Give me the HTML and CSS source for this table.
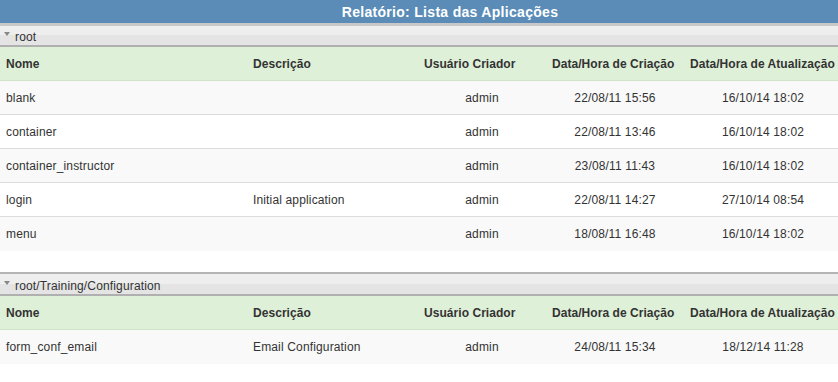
FILE: index.html
```html
<!DOCTYPE html>
<html lang="pt">
<head>
<meta charset="utf-8">
<link rel="stylesheet" href="styles.css">
</head>
<body>
<div class="report">
  <div class="title">Relatório: Lista das Aplicações</div>

  <section class="group">
    <div class="group-head"><span class="caret"></span>root</div>
    <div class="row head">
      <div class="c name">Nome</div><div class="c desc">Descrição</div><div class="c user">Usuário Criador</div><div class="c dt">Data/Hora de Criação</div><div class="c dt2">Data/Hora de Atualização</div><div class="c fill"></div>
    </div>
    <div class="row odd"><div class="c name">blank</div><div class="c desc"></div><div class="c user ctr">admin</div><div class="c dt ctr">22/08/11 15:56</div><div class="c dt2 ctr">16/10/14 18:02</div><div class="c fill"></div></div>
    <div class="row even"><div class="c name">container</div><div class="c desc"></div><div class="c user ctr">admin</div><div class="c dt ctr">22/08/11 13:46</div><div class="c dt2 ctr">16/10/14 18:02</div><div class="c fill"></div></div>
    <div class="row odd"><div class="c name">container_instructor</div><div class="c desc"></div><div class="c user ctr">admin</div><div class="c dt ctr">23/08/11 11:43</div><div class="c dt2 ctr">16/10/14 18:02</div><div class="c fill"></div></div>
    <div class="row even"><div class="c name">login</div><div class="c desc">Initial application</div><div class="c user ctr">admin</div><div class="c dt ctr">22/08/11 14:27</div><div class="c dt2 ctr">27/10/14 08:54</div><div class="c fill"></div></div>
    <div class="row odd last"><div class="c name">menu</div><div class="c desc"></div><div class="c user ctr">admin</div><div class="c dt ctr">18/08/11 16:48</div><div class="c dt2 ctr">16/10/14 18:02</div><div class="c fill"></div></div>
  </section>

  <section class="group second">
    <div class="group-head"><span class="caret"></span>root/Training/Configuration</div>
    <div class="row head">
      <div class="c name">Nome</div><div class="c desc">Descrição</div><div class="c user">Usuário Criador</div><div class="c dt">Data/Hora de Criação</div><div class="c dt2">Data/Hora de Atualização</div><div class="c fill"></div>
    </div>
    <div class="row odd last"><div class="c name">form_conf_email</div><div class="c desc">Email Configuration</div><div class="c user ctr">admin</div><div class="c dt ctr">24/08/11 15:34</div><div class="c dt2 ctr">18/12/14 11:28</div><div class="c fill"></div></div>
  </section>
</div>
</body>
</html>
```
FILE: styles.css
```css
html, body {
  margin: 0;
  padding: 0;
  background: #fff;
  overflow: hidden;
}
body {
  font-family: "Liberation Sans", Arial, sans-serif;
  font-size: 12px;
  letter-spacing: 0.15px;
  color: #333;
}
.report {
  width: 900px;
}
.title {
  height: 23px;
  line-height: 24px;
  background: #5a8cb7;
  color: #fff;
  font-weight: bold;
  font-size: 14px;
  letter-spacing: 0.3px;
  text-align: center;
}
.group {
  border-top: 3px solid #c8c8c8;
}
.group.second {
  margin-top: 21px;
  border-top: 2px solid #b4b4b4;
}
.group-head {
  height: 16px;
  padding-top: 3px;
  background: linear-gradient(#eeeeee 0, #eeeeee 50%, #e4e4e4 50%, #e4e4e4 100%);
  border-bottom: 2px solid #b0b0b0;
  color: #333;
  padding-left: 4px;
  display: flex;
  align-items: center;
}
.second .group-head {
  height: 16px;
  padding-top: 4px;
}
.caret {
  width: 0;
  height: 0;
  border-left: 3px solid transparent;
  border-right: 3px solid transparent;
  border-top: 4px solid #888;
  margin-right: 5px;
  margin-top: -6px;
}
.row {
  display: grid;
  grid-template-columns: 247px 171px 128px 138px 158px 1fr;
  height: 33px;
  border-bottom: 1px solid #dcdcdc;
  align-items: center;
}
.row.head {
  background: #dff0d8;
  font-weight: bold;
  letter-spacing: 0.05px;
  height: 33px;
  border-bottom: 1px solid #d0e3c8;
}
.row.odd { background: #f9f9f9; }
.row.even { background: #fff; }
.row.last { border-bottom: none; height: 34px; }
.c {
  padding-left: 6px;
  white-space: nowrap;
}
.c.ctr {
  padding-left: 0;
  text-align: center;
}
```
